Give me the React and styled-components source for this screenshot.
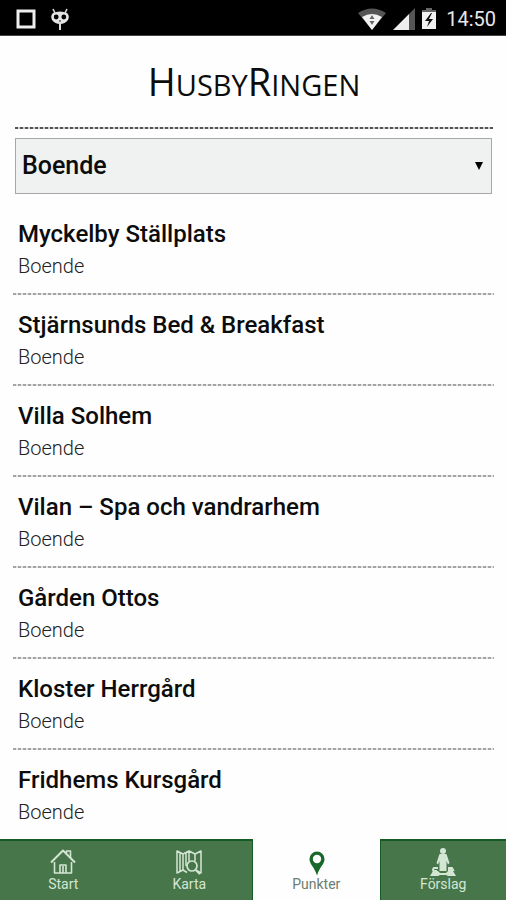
import React, { useState } from "react";
import styled, { createGlobalStyle } from "styled-components";

const GlobalStyle = createGlobalStyle`
  * { box-sizing: border-box; }
  body {
    margin: 0;
    background: #fefefe;
    color: #0c0c0c;
    font-family: Roboto, "Liberation Sans", sans-serif;
  }
`;

const Screen = styled.div`
  display: flex;
  flex-direction: column;
  height: 100vh;
`;

const StatusBar = styled.div`
  display: flex;
  flex: none;
  align-items: center;
  justify-content: space-between;
  height: 36px;
  padding: 2px 10px 0 16px;
  background: #000;
  border-bottom: 1px solid #444;
  color: #e8e8e8;
`;

const StatusGroup = styled.div`
  display: flex;
  align-items: center;
  gap: ${(p) => p.$gap}px;
`;

const Clock = styled.time`
  margin-left: 3px;
  font-size: 20px;
  line-height: 24px;
`;

const Header = styled.header`
  flex: none;
  margin: 0 13px 0 15px;
  padding: 23px 0 16px;
  text-align: center;
`;

const Logo = styled.h1`
  margin: 0;
  font-family: "Open Sans", "Noto Sans", sans-serif;
  font-size: 29px;
  font-weight: 400;
  line-height: 52px;
  text-transform: uppercase;
`;

const LogoCap = styled.span`
  font-size: 38px;
  line-height: 38px;
`;

const DottedLine = styled.hr`
  flex: none;
  width: auto;
  height: 2px;
  margin: ${(p) => (p.$list ? "0 12px 0 13px" : "0 13px 0 15px")};
  border: 0;
  background: repeating-linear-gradient(
    90deg,
    ${(p) => (p.$list ? "#a4a4a4" : "#555")} 0 3px,
    ${(p) => (p.$list ? "#e4e4e4" : "#ccc")} 3px 5px
  );
`;

const Filter = styled.label`
  display: grid;
  flex: none;
  align-items: center;
  margin: 9px 14px 0 15px;

  > * { grid-area: 1 / 1; }
  > svg {
    justify-self: end;
    margin-right: 9px;
    pointer-events: none;
  }
`;

const FilterSelect = styled.select`
  width: 100%;
  height: 56px;
  padding: 0 24px 0 6px;
  appearance: none;
  border: 1px solid #a6a8a7;
  border-radius: 0;
  background: #eff2f1;
  color: #0c0c0c;
  font: 500 25px/32px Roboto, "Liberation Sans", sans-serif;
`;

const List = styled.ul`
  flex: 1;
  min-height: 0;
  margin: 0;
  padding: 10px 0 0;
  overflow-y: auto;
  list-style: none;
  scrollbar-width: none;
`;

const PlaceLink = styled.a`
  display: block;
  padding: 14px 18px 15px;
  color: inherit;
  text-decoration: none;
`;

const PlaceName = styled.h2`
  margin: 0;
  font-size: 24px;
  font-weight: 500;
  line-height: 32px;
`;

const PlaceKind = styled.p`
  margin: 4px 0 0;
  color: #222;
  font-size: 20px;
  font-weight: 300;
  line-height: 24px;
`;

const TabBar = styled.nav`
  display: grid;
  flex: none;
  grid-template-columns: repeat(4, 1fr);
`;

const Tab = styled.a`
  display: flex;
  flex-direction: column;
  align-items: center;
  height: 61px;
  padding-top: 7px;
  border-top: 2px solid ${(p) => (p.$active ? "#fefefe" : "#145c24")};
  border-right: ${(p) => (p.$edge ? "1px solid #145c24" : "0")};
  border-left: ${(p) => (p.$start ? "1px solid #145c24" : "0")};
  background: ${(p) => (p.$active ? "#fefefe" : "#48764b")};
  color: ${(p) => (p.$active ? "#6c7c6e" : "#d3e6d3")};
  font-size: 14px;
  line-height: 16px;
  text-decoration: none;

  > svg { flex: none; }
`;

const NotificationIcon = () => (
  <svg width="20" height="20" viewBox="0 0 20 20" aria-hidden="true">
    <rect x="2" y="2" width="16" height="16" fill="none" stroke="#eee" strokeWidth="3" />
  </svg>
);

const CidIcon = () => (
  <svg width="20" height="24" viewBox="0 0 20 24" aria-hidden="true">
    <path d="M3 2 5 6M17 2 15 6" stroke="#ddd" strokeWidth="1.6" />
    <path d="M3 6Q10 3 17 6Q20 9 18 13Q15 17 10 17Q5 17 2 13Q0 9 3 6Z" fill="#e4e4e4" />
    <circle cx="6.2" cy="10" r="2.4" />
    <circle cx="13.8" cy="10" r="2.4" />
    <circle cx="10" cy="14" r=".8" />
    <path d="M10 17v6" stroke="#ddd" strokeWidth="2" />
  </svg>
);

const WifiIcon = () => (
  <svg width="28" height="22" viewBox="0 0 28 22" aria-hidden="true">
    <path d="M0 5Q14-4 28 5L14 22Z" fill="#555" />
    <path d="M4 9Q14 3 24 9L14 22Z" fill="#f2f2f2" />
    <path d="m11.5 11 2.5-4 2.5 4ZM11.5 13h5L14 17Z" fill="#666" />
  </svg>
);

const SignalIcon = () => (
  <svg width="22" height="22" viewBox="0 0 22 22" aria-hidden="true">
    <path d="M16 6 22 0V22H16Z" fill="#555" />
    <path d="M0 22 16 6V22Z" fill="#eee" />
  </svg>
);

const BatteryIcon = () => (
  <svg width="14" height="21" viewBox="0 0 14 21" aria-hidden="true">
    <path d="M4 0h6v2h4v3H0V2h4Z" fill="#666" />
    <path d="M0 4h14v17H0Z" fill="#f2f2f2" />
    <path d="M9 5 3 13h4l-2 6 6-8H7l3-6Z" fill="#111" />
  </svg>
);

const ArrowIcon = () => (
  <svg width="8" height="8" viewBox="0 0 8 8" aria-hidden="true">
    <path d="M0 0H8L4 8Z" />
  </svg>
);

const HomeIcon = () => (
  <svg width="28" height="28" viewBox="0 0 28 28" fill="none" stroke="currentColor" strokeWidth="1.6" strokeLinejoin="round" aria-hidden="true">
    <path d="M2 14.500 14 2.500 26 14.500" strokeWidth="2" />
    <path d="M17.500 5V3h4v7M5.500 14v11h17V14M11 25v-8h6v8M14 18v7" />
  </svg>
);

const MapIcon = () => (
  <svg width="28" height="28" viewBox="0 0 28 28" fill="none" stroke="currentColor" strokeWidth="1.5" strokeLinejoin="round" aria-hidden="true">
    <path d="M12 24.500 8 22l-6 3V3l6 3 6-3 6 3 6-3v22l-3-2M8 6v16M14 3v10M20 6v7M5 5v18M11 5v13" />
    <circle cx="17" cy="18" r="5" fill="#48764b" strokeWidth="1.7" />
    <path d="m21 22 4 4" strokeWidth="2.4" />
  </svg>
);

const PinIcon = () => (
  <svg width="28" height="28" viewBox="0 0 28 28" aria-hidden="true">
    <path d="M15 3.500a7.500 7.500 0 0 0-7.500 7.500C7.500 16.500 12 18 15 27.500c3-9.500 7.500-11 7.500-16.500A7.500 7.500 0 0 0 15 3.500Zm0 3.300a4.200 4.200 0 1 1 0 8.400a4.200 4.200 0 0 1 0-8.400Z" fill="#18682c" />
  </svg>
);

const HikerIcon = () => (
  <svg width="28" height="28" viewBox="0 0 26 28" aria-hidden="true">
    <g fill="currentColor">
      <circle cx="13" cy="3" r="3" />
      <path d="M9.500 6h7l3 9-1.500 1.500L16.500 13v10h-7V13L8 16.500 6.500 15Z" />
      <path d="M0 28 3 23H8l2 2h6l2-2h5l3 5h-8l-2-1H10l-2 1Z" />
    </g>
    <path d="M8 20H4q-2 2 0 3h3M18 20h4l1 2h-4v3" fill="none" stroke="currentColor" strokeWidth="2" />
  </svg>
);

const places = [
  "Myckelby Ställplats",
  "Stjärnsunds Bed & Breakfast",
  "Villa Solhem",
  "Vilan – Spa och vandrarhem",
  "Gården Ottos",
  "Kloster Herrgård",
  "Fridhems Kursgård",
];

const tabs = [
  { id: "start", label: "Start", Icon: HomeIcon },
  { id: "karta", label: "Karta", Icon: MapIcon, edge: true },
  { id: "punkter", label: "Punkter", Icon: PinIcon, active: true },
  { id: "forslag", label: "Förslag", Icon: HikerIcon, start: true },
];

export default function App() {
  const [kind, setKind] = useState("Boende");
  return (
    <Screen>
      <GlobalStyle />
      <StatusBar>
        <StatusGroup $gap={14}>
          <NotificationIcon />
          <CidIcon />
        </StatusGroup>
        <StatusGroup $gap={7}>
          <WifiIcon />
          <SignalIcon />
          <BatteryIcon />
          <Clock>14:50</Clock>
        </StatusGroup>
      </StatusBar>
      <Header>
        <Logo>
          <LogoCap>H</LogoCap>usby<LogoCap>R</LogoCap>ingen
        </Logo>
      </Header>
      <DottedLine />
      <Filter>
        <FilterSelect aria-label="Kategori" value={kind} onChange={(e) => setKind(e.target.value)}>
          <option>Boende</option>
        </FilterSelect>
        <ArrowIcon />
      </Filter>
      <List>
        {places.map((name) => (
          <li key={name}>
            <PlaceLink href="#punkter">
              <PlaceName>{name}</PlaceName>
              <PlaceKind>{kind}</PlaceKind>
            </PlaceLink>
            <DottedLine $list />
          </li>
        ))}
      </List>
      <TabBar>
        {tabs.map(({ id, label, Icon, active, edge, start }) => (
          <Tab
            key={id}
            href={`#${id}`}
            $active={active}
            $edge={edge}
            $start={start}
            aria-current={active ? "page" : undefined}
          >
            <Icon />
            {label}
          </Tab>
        ))}
      </TabBar>
    </Screen>
  );
}
